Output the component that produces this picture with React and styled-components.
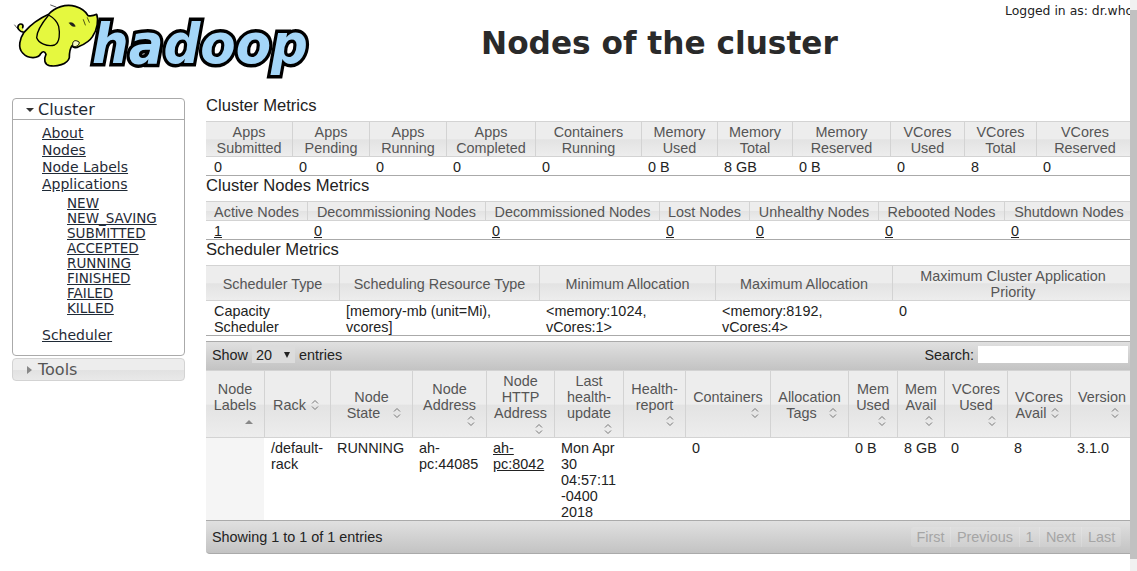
import React from "react";
import styled, { createGlobalStyle } from "styled-components";

const GlobalStyle = createGlobalStyle`
  html, body {
    margin: 0;
    padding: 0;
    height: 100%;
    overflow: hidden;
    background: #fff;
  }
  body {
    font-family: "Liberation Sans", Arial, sans-serif;
    font-size: 14.4px;
    line-height: 16px;
    color: #222;
  }
`;

const Page = styled.div`
  position: relative;
  width: 1130px;
  height: 571px;
  overflow: hidden;
`;

const Header = styled.header`
  display: flex;
  align-items: flex-start;
  height: 96px;
`;

const LogoWrap = styled.div`
  flex: 0 0 330px;
  height: 90px;
`;

const Title = styled.h1`
  margin: 0;
  width: 659px;
  padding-top: 25px;
  text-align: center;
  font-family: "DejaVu Sans", Verdana, sans-serif;
  font-size: 31.2px;
  line-height: 37px;
  font-weight: bold;
  color: #2a2a2a;
`;

const LoggedIn = styled.div`
  position: absolute;
  top: 4px;
  left: 1005px;
  white-space: nowrap;
  font-family: "DejaVu Sans", Verdana, sans-serif;
  font-size: 12.4px;
  line-height: 14px;
  color: #222;
`;

const Body = styled.div`
  display: flex;
  align-items: flex-start;
`;

const Sidebar = styled.nav`
  flex: 0 0 173px;
  margin: 2px 21px 0 12px;
  font-family: "DejaVu Sans", Verdana, sans-serif;
`;

const Panel = styled.div`
  border: 1px solid #aaa;
  border-radius: 4px;
  height: 258px;
  box-sizing: border-box;
  margin-bottom: 2px;
`;

const PanelTitle = styled.div`
  display: flex;
  align-items: center;
  box-sizing: border-box;
  height: 21px;
  padding: ${(props) => (props.closed ? "0 0 0 13px" : "1px 0 0 13px")};
  gap: 1px;
  font-size: 16px;
  color: ${(props) => (props.closed ? "#555" : "#1f2a36")};
  border-bottom: ${(props) => (props.closed ? "none" : "1px solid #aaa")};
`;

const Closed = styled.div`
  border: 1px solid #d3d3d3;
  border-radius: 4px;
  background: linear-gradient(#ededed 50%, #e2e2e2 55%, #e9e9e9 100%);
`;

const Caret = styled.span`
  width: 0;
  height: 0;
  margin-right: 3px;
  border-style: solid;
  border-color: transparent;
  ${(props) =>
    props.closed
      ? "border-width: 4px 0 4px 5px; border-left-color: #888; margin-left: 1px; margin-right: 5px;"
      : "border-width: 4px 4px 0 4px; border-top-color: #333;"}
`;

const MenuList = styled.ul`
  list-style: none;
  margin: 0;
  padding: 5px 0 0 29px;
  font-size: 14px;
  line-height: 17px;
`;

const SubList = styled.ul`
  list-style: none;
  margin: 3px 0 11px;
  padding: 0 0 0 25px;
  font-size: 13.5px;
  line-height: 15px;
`;

const NavLink = styled.a`
  color: #1f2a36;
  text-decoration: underline;
`;

const Main = styled.main`
  flex: 0 0 924px;
`;

const Heading = styled.h3`
  margin: 1px 0 6px;
  font-size: 16.6px;
  line-height: 18px;
  font-weight: normal;
  color: #222;
`;

const Table = styled.table`
  width: 924px;
  table-layout: fixed;
  border-collapse: separate;
  border-spacing: 0;
`;

const Th = styled.th`
  box-sizing: border-box;
  padding: 2px 7px 0;
  font-weight: normal;
  text-align: center;
  vertical-align: middle;
  color: #555;
  border-top: 1px solid #d3d3d3;
  border-bottom: 1px solid #d3d3d3;
  border-left: 1px solid #d3d3d3;
  &:first-child {
    border-left: none;
  }
  background: linear-gradient(#ededed 50%, #e3e3e3 52%, #ededed 100%);
`;

const MetricTh = styled(Th)`
  &:last-child {
    padding-right: 4px;
  }
`;

const Td = styled.td`
  padding: 2px 7px 0;
  vertical-align: top;
  color: #222;
  border-bottom: 1px solid #aaa;
  background: ${(props) => (props.sorted ? "#f5f5f5" : "#fff")};
  &:first-child {
    padding-left: 8px;
  }
`;

const Anchor = styled.a`
  color: #222;
  text-decoration: underline;
`;

const Bar = styled.div`
  display: flex;
  align-items: center;
  justify-content: space-between;
  box-sizing: border-box;
  padding: 0 2px 0 6px;
  color: #222;
  background: linear-gradient(#e0e0e0, #c3c3c3);
`;

const Toolbar = styled(Bar)`
  margin-top: 5px;
  height: 29px;
  padding-bottom: 3px;
  border-top: 1px solid #aaa;
`;

const Footer = styled(Bar)`
  height: 33px;
  padding-right: 9px;
  border-bottom: 1px solid #aaa;
  border-radius: 0 0 0 4px;
`;

const Length = styled.label`
  display: flex;
  align-items: center;
  gap: 4px;
`;

const SelectWrap = styled.span`
  position: relative;
  display: inline-flex;
`;

const Select = styled.select`
  appearance: none;
  width: 43px;
  height: 17px;
  padding: 0 0 0 4px;
  border: none;
  border-radius: 0;
  background: #dcdcdc;
  color: #222;
  font: 14.4px "Liberation Sans", Arial, sans-serif;
`;

const SelectArrow = styled.span`
  position: absolute;
  top: 6px;
  right: 5px;
  width: 0;
  height: 0;
  border-style: solid;
  border-color: #222 transparent transparent;
  border-width: 6px 3.5px 0;
`;

const SearchLabel = styled.label`
  display: flex;
  align-items: center;
  gap: 4px;
`;

const SearchInput = styled.input`
  box-sizing: border-box;
  width: 150px;
  height: 17px;
  padding: 0;
  border: none;
  background: #fff;
`;

const Pager = styled.div`
  display: flex;
  height: 20px;
  background: rgba(255, 255, 255, 0.12);
  border-radius: 3px;
`;

const PageButton = styled.span`
  display: flex;
  align-items: center;
  padding: 0 5.75px;
  color: #a5a5a5;
  border-left: 1px solid rgba(255, 255, 255, 0.16);
  &:first-child {
    border-left: none;
  }
`;

const Chevrons = styled.svg`
  float: right;
  display: block;
  width: 16px;
  height: 16px;
`;

const ScrollTrack = styled.div`
  position: fixed;
  top: 0;
  right: 0;
  width: 7px;
  height: 571px;
  background: #f1f1f1;
`;

const ScrollThumb = styled.div`
  margin-top: 10px;
  height: 549px;
  background: #c1c1c1;
`;

const SortIcon = ({ sorted }) => (
  <Chevrons viewBox="0 0 16 16" aria-hidden="true">
    {sorted ? (
      <path d="M4 11 L8 7 L12 11 Z" fill="#888" />
    ) : (
      <path d="M5 6.5 L8 3.5 L11 6.5 M5 9.5 L8 12.5 L11 9.5" fill="none" stroke="#777" strokeWidth="1" />
    )}
  </Chevrons>
);

const Logo = () => (
  <svg width="330" height="90" viewBox="0 0 330 90" aria-label="hadoop">
    <text
      x="92"
      y="63"
      textLength="216"
      lengthAdjust="spacingAndGlyphs"
      fontFamily="DejaVu Sans"
      fontWeight="bold"
      fontStyle="italic"
      fontSize="56"
      fill="#a4d6f8"
      stroke="#000"
      strokeWidth="7"
      paintOrder="stroke"
      strokeLinejoin="miter"
    >
      hadoop
    </text>
    <g transform="translate(10 1) scale(.3333)" stroke="#000" strokeLinejoin="round" strokeLinecap="round">
      <path
        d="M42 94 C26 92 20 80 26 72 C32 66 42 70 38 80 M42 94 C58 76 84 54 116 40 C134 18 168 8 196 16 C216 22 228 32 234 44 C244 46 252 44 260 40 C266 56 262 86 248 106 C238 122 222 130 208 136 C198 142 190 142 186 134 C180 142 178 156 178 170 C172 190 140 198 118 194 C104 190 100 176 108 160 C104 150 98 150 92 158 C86 172 56 176 38 156 C22 140 30 112 42 94 Z"
        fill="#e5f83f"
        strokeWidth="5"
      />
      <path
        d="M116 42 C98 64 80 92 80 110 C86 126 110 138 134 132 C150 124 150 96 146 76 C142 62 130 50 116 42 Z"
        fill="#e5f83f"
        strokeWidth="4"
      />
      <path d="M188 132 C186 120 196 114 208 124 C208 132 198 140 190 136 Z" fill="#f6f8c0" strokeWidth="3" />
      <path d="M178 66 C185 62 193 68 196 76 C188 78 182 74 178 66 Z" fill="#222" strokeWidth="1" />
      <path d="M220 56 L226 72 M232 50 L238 64 M122 12 L138 18 M14 72 L22 82" fill="none" strokeWidth="2" />
    </g>
  </svg>
);

const clusterHead = [
  ["Apps Submitted", 86],
  ["Apps Pending", 77],
  ["Apps Running", 77],
  ["Apps Completed", 89],
  ["Containers Running", 106],
  ["Memory Used", 76],
  ["Memory Total", 75],
  ["Memory Reserved", 98],
  ["VCores Used", 74],
  ["VCores Total", 72],
  ["VCores Reserved", 94],
];
const clusterRow = ["0", "0", "0", "0", "0", "0 B", "8 GB", "0 B", "0", "8", "0"];

const nodesHead = [
  ["Active Nodes", 101],
  ["Decommissioning Nodes", 178],
  ["Decommissioned Nodes", 174],
  ["Lost Nodes", 90],
  ["Unhealthy Nodes", 129],
  ["Rebooted Nodes", 126],
  ["Shutdown Nodes", 126],
];
const nodesRow = ["1", "0", "0", "0", "0", "0", "0"];

const schedulerHead = [
  ["Scheduler Type", 133],
  ["Scheduling Resource Type", 200],
  ["Minimum Allocation", 176],
  ["Maximum Allocation", 177],
  ["Maximum Cluster Application Priority", 238],
];
const schedulerRow = [
  "Capacity Scheduler",
  "[memory-mb (unit=Mi), vcores]",
  "<memory:1024, vCores:1>",
  "<memory:8192, vCores:4>",
  "0",
];

const nodeColumns = [
  ["Node Labels", 58, ""],
  ["Rack", 66, "/default-rack"],
  ["Node State", 82, "RUNNING"],
  ["Node Address", 74, "ah-pc:44085"],
  ["Node HTTP Address", 68, "ah-pc:8042"],
  ["Last health-update", 69, "Mon Apr 30 04:57:11 -0400 2018"],
  ["Health-report", 62, ""],
  ["Containers", 85, "0"],
  ["Allocation Tags", 78, ""],
  ["Mem Used", 49, "0 B"],
  ["Mem Avail", 47, "8 GB"],
  ["VCores Used", 63, "0"],
  ["VCores Avail", 63, "8"],
  ["Version", 60, "3.1.0"],
];

const Cols = ({ widths }) => (
  <colgroup>
    {widths.map((w, i) => (
      <col key={i} width={w} />
    ))}
  </colgroup>
);

const MetricTable = ({ head, row, linked }) => (
  <Table>
    <Cols widths={head.map((h) => h[1])} />
    <thead>
      <tr>
        {head.map(([label]) => (
          <MetricTh key={label}>{label}</MetricTh>
        ))}
      </tr>
    </thead>
    <tbody>
      <tr>
        {row.map((value, i) => (
          <Td key={i}>{linked ? <Anchor href="#">{value}</Anchor> : value}</Td>
        ))}
      </tr>
    </tbody>
  </Table>
);

const appStates = ["NEW", "NEW_SAVING", "SUBMITTED", "ACCEPTED", "RUNNING", "FINISHED", "FAILED", "KILLED"];

export default function App() {
  return (
    <Page>
      <GlobalStyle />
      <Header>
        <LogoWrap>
          <Logo />
        </LogoWrap>
        <Title>Nodes of the cluster</Title>
      </Header>
      <LoggedIn>Logged in as: dr.who</LoggedIn>
      <Body>
        <Sidebar>
          <Panel>
            <PanelTitle>
              <Caret />
              Cluster
            </PanelTitle>
            <MenuList>
              <li><NavLink href="#">About</NavLink></li>
              <li><NavLink href="#">Nodes</NavLink></li>
              <li><NavLink href="#">Node Labels</NavLink></li>
              <li>
                <NavLink href="#">Applications</NavLink>
                <SubList>
                  {appStates.map((state) => (
                    <li key={state}><NavLink href="#">{state}</NavLink></li>
                  ))}
                </SubList>
              </li>
              <li><NavLink href="#">Scheduler</NavLink></li>
            </MenuList>
          </Panel>
          <Closed>
            <PanelTitle closed>
              <Caret closed />
              Tools
            </PanelTitle>
          </Closed>
        </Sidebar>
        <Main>
          <Heading>Cluster Metrics</Heading>
          <MetricTable head={clusterHead} row={clusterRow} />
          <Heading>Cluster Nodes Metrics</Heading>
          <MetricTable head={nodesHead} row={nodesRow} linked />
          <Heading>Scheduler Metrics</Heading>
          <MetricTable head={schedulerHead} row={schedulerRow} />
          <Toolbar>
            <Length>
              Show
              <SelectWrap>
                <Select defaultValue="20">
                  <option>20</option>
                  <option>50</option>
                  <option>100</option>
                </Select>
                <SelectArrow />
              </SelectWrap>
              entries
            </Length>
            <SearchLabel>
              Search:
              <SearchInput type="text" />
            </SearchLabel>
          </Toolbar>
          <Table>
            <Cols widths={nodeColumns.map((c) => c[1])} />
            <thead>
              <tr>
                {nodeColumns.map(([label], i) => (
                  <Th key={label}>
                    {label}
                    <SortIcon sorted={i === 0} />
                  </Th>
                ))}
              </tr>
            </thead>
            <tbody>
              <tr>
                {nodeColumns.map(([label, , value], i) => (
                  <Td key={label} sorted={i === 0}>
                    {label === "Node HTTP Address" ? <Anchor href="#">{value}</Anchor> : value}
                  </Td>
                ))}
              </tr>
            </tbody>
          </Table>
          <Footer>
            <span>Showing 1 to 1 of 1 entries</span>
            <Pager>
              <PageButton>First</PageButton>
              <PageButton>Previous</PageButton>
              <PageButton>1</PageButton>
              <PageButton>Next</PageButton>
              <PageButton>Last</PageButton>
            </Pager>
          </Footer>
        </Main>
      </Body>
      <ScrollTrack>
        <ScrollThumb />
      </ScrollTrack>
    </Page>
  );
}
